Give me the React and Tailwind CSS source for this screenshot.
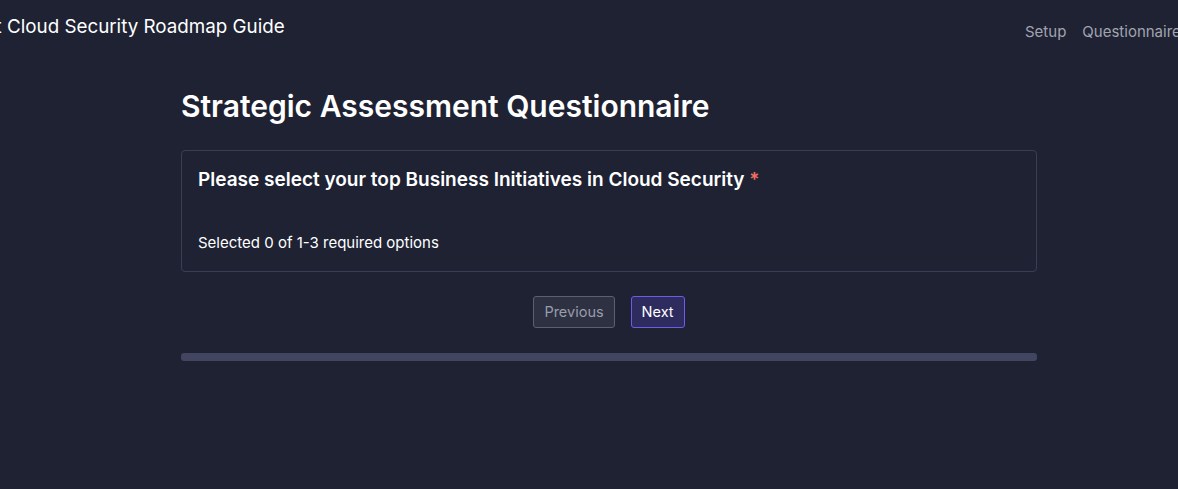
const App = () => {
  return (
    <div className="min-h-screen bg-[#1e2233] text-white overflow-hidden" style={{ fontFamily: "Inter, 'Noto Sans', sans-serif" }}>
      <header className="flex justify-between items-start h-[62px]">
        <h1 className="flex text-[18.8px] leading-[28px] mt-[13px] font-normal whitespace-nowrap">
          <span className="w-[7px] overflow-hidden flex justify-end">Fortinet&nbsp;</span>
          Cloud Security Roadmap Guide
        </h1>
        <nav className="w-[153px] shrink-0 overflow-hidden whitespace-nowrap flex gap-4 mt-[21px] text-[15px] leading-[22px] text-[#a1a4b0]">
          <a href="#">Setup</a>
          <a href="#">Questionnaire</a>
        </nav>
      </header>

      <main className="ml-[181px] w-[856px] pt-[26px]">
        <h2 className="text-[30px] leading-[36px] font-semibold mb-[26px]">
          Strategic Assessment Questionnaire
        </h2>

        <div className="border border-[#3a3e54] rounded-[4px] px-[16px] pt-[16px] pb-[18px]">
          <h3 className="text-[19px] leading-[26px] font-semibold">
            Please select your top Business Initiatives in Cloud Security{" "}
            <span className="text-[#f0705f]">*</span>
          </h3>
          <p className="text-[15px] leading-[20px] mt-[40px]">Selected 0 of 1-3 required options</p>
        </div>

        <div className="flex justify-center gap-4 mt-[24px]">
          <button className="h-[32px] px-[10px] text-[14.5px] text-[#9a9dab] bg-[#2d3142] border border-[#5b5f70] rounded-[3px]">
            Previous
          </button>
          <button className="h-[32px] px-[10px] text-[14.5px] text-white bg-[#2e2b5e] border border-[#6d5ce8] rounded-[3px]">
            Next
          </button>
        </div>

        <div className="h-[8px] mt-[25px] bg-[#424560] rounded-[3px]"></div>
      </main>
    </div>
  );
};

export default App;
